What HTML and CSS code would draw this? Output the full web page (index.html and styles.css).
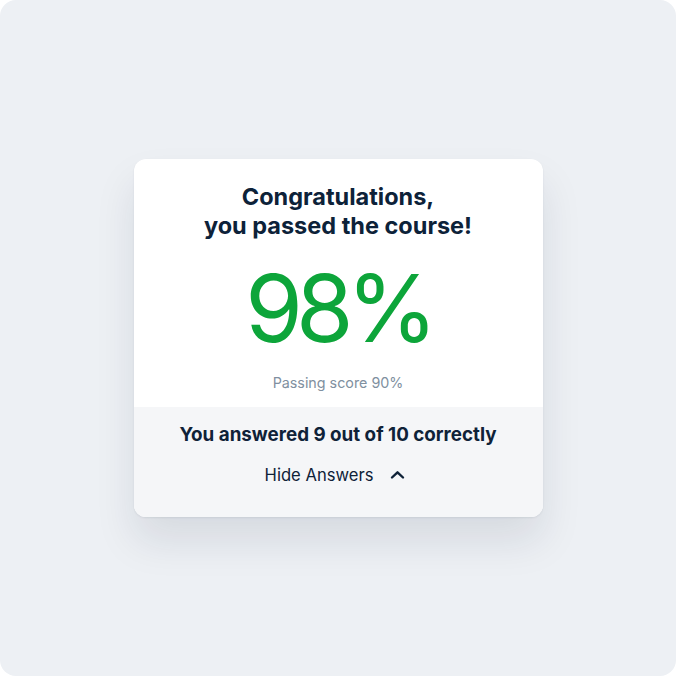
FILE: index.html
```html
<!DOCTYPE html>
<html lang="en">
<head>
    <meta charset="UTF-8">
    <title>Course result</title>
    <link rel="stylesheet" href="styles.css">
</head>
<body>
<div class="page">
    <div class="result-card">
        <div class="result-top">
            <h1 class="result-title">Congratulations,<br>you passed the course!</h1>
            <div class="result-score">98%</div>
            <p class="result-pass">Passing score 90%</p>
        </div>
        <div class="result-bottom">
            <p class="result-count">You answered 9 out of 10 correctly</p>
            <a href="" class="result-toggle">
                <span>Hide Answers</span>
                <svg width="15" height="14" viewBox="0 0 15 14" fill="none">
                    <path d="M2 9.5 L7.5 4.3 L13 9.5" stroke="#0f2238" stroke-width="2.4" stroke-linecap="round" stroke-linejoin="round"/>
                </svg>
            </a>
        </div>
    </div>
</div>
</body>
</html>
```

FILE: styles.css
```css
* {
    padding: 0;
    margin: 0;
    box-sizing: border-box;
}
html, body {
    background-color: #fff;
}
a {
    text-decoration: none;
    color: inherit;
}
.page {
    width: 676px;
    height: 676px;
    border-radius: 16px;
    background-color: #edf0f4;
    display: flex;
    align-items: center;
    justify-content: center;
    font-family: Inter, "Liberation Sans", sans-serif;
    color: #0f2238;
}
.result-card {
    width: 409px;
    background-color: #fff;
    border-radius: 12px;
    overflow: hidden;
    box-shadow: 0 1px 2px rgba(15, 34, 56, 0.08), 0 24px 40px rgba(15, 34, 56, 0.10);
}
.result-top {
    padding: 23px 20px 14px;
    text-align: center;
}
.result-title {
    font-size: 23.5px;
    font-weight: 700;
    line-height: 29px;
    color: #0d2239;
}
.result-score {
    margin-top: 20px;
    font-size: 93px;
    line-height: 96px;
    font-weight: 400;
    letter-spacing: -7px;
    color: #0da53a;
}
.result-pass {
    margin-top: 17px;
    font-size: 14.3px;
    line-height: 20px;
    color: #8090a0;
}
.result-bottom {
    background-color: #f5f6f8;
    padding: 16px 20px 30px;
    text-align: center;
}
.result-count {
    font-size: 18.8px;
    line-height: 24px;
    font-weight: 700;
}
.result-toggle {
    margin-top: 16px;
    padding-right: 6px;
    display: flex;
    justify-content: center;
    align-items: center;
    gap: 17px;
    height: 24px;
    font-size: 16.6px;
    line-height: 24px;
}
```
